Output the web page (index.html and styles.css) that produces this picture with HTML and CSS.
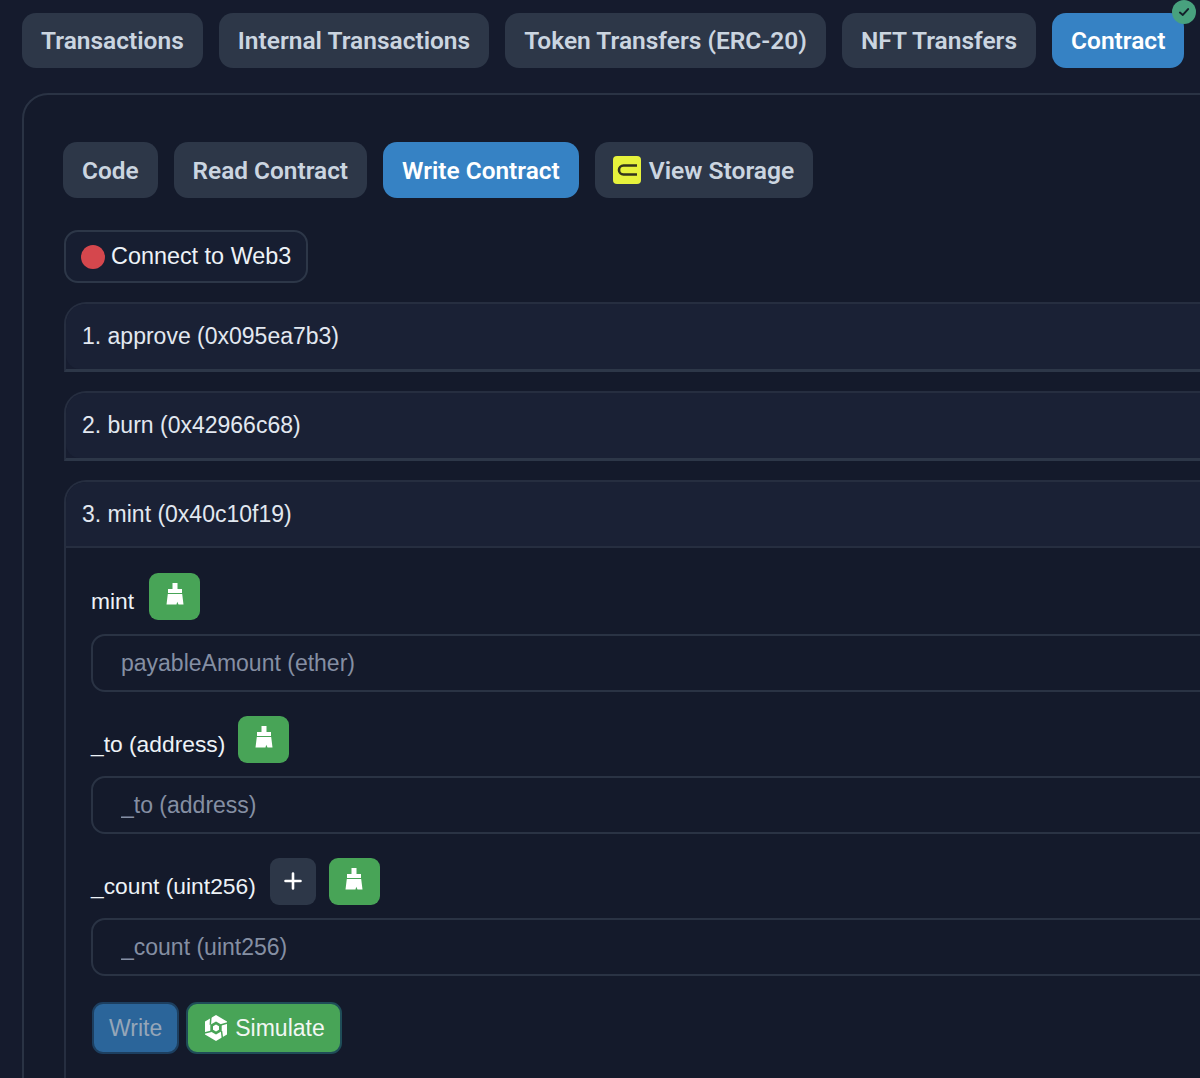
FILE: index.html
```html
<!DOCTYPE html>
<html lang="en">
<head>
  <meta charset="UTF-8" />
  <meta name="viewport" content="width=device-width, initial-scale=1.0" />
  <title>Contract – Write Contract</title>
  <link rel="stylesheet" href="styles.css">
</head>
<body>

  <nav class="tabs">
    <button class="tab">Transactions</button>
    <button class="tab">Internal Transactions</button>
    <button class="tab">Token Transfers (ERC-20)</button>
    <button class="tab">NFT Transfers</button>
    <button class="tab active verified">
      Contract
      <span class="check">
        <svg viewBox="0 0 24 24" width="14" height="14"><path d="M5 13l5 4L19 7" fill="none" stroke="#14202b" stroke-width="3.4" stroke-linecap="round" stroke-linejoin="round"/></svg>
      </span>
    </button>
  </nav>

  <main class="panel">
    <div class="tabs subtabs">
      <button class="tab">Code</button>
      <button class="tab">Read Contract</button>
      <button class="tab active">Write Contract</button>
      <button class="tab storage">
        <svg viewBox="0 0 28 28" width="28" height="28">
          <rect width="28" height="28" rx="4" fill="#e6f23c"/>
          <path d="M24 9.500H10.500a4.500 4.500 0 0 0 0 9H24" fill="none" stroke="#33351c" stroke-width="2.600"/>
        </svg>
        View Storage
      </button>
    </div>

    <button class="connect"><span class="dot"></span>Connect to Web3</button>

    <section class="item">
      <h3 class="item-head">1. approve (0x095ea7b3)</h3>
    </section>
    <section class="item">
      <h3 class="item-head">2. burn (0x42966c68)</h3>
    </section>

    <section class="item open">
      <h3 class="item-head">3. mint (0x40c10f19)</h3>
      <form class="item-body">
        <div class="field">
          <div class="label-row">
            <label>mint</label>
            <button type="button" class="icon-btn clear">
              <svg viewBox="0 0 18 22" width="18" height="22"><path d="M6.500 0h5v6h4.500v4H2V6h4.500zM1.800 11h14.400l1.300 10.500h-5l-1.300-2.800-.7 2.800H.5z" fill="#fff"/></svg>
            </button>
          </div>
          <input class="text-input" placeholder="payableAmount (ether)">
        </div>
        <div class="field">
          <div class="label-row">
            <label>_to (address)</label>
            <button type="button" class="icon-btn clear">
              <svg viewBox="0 0 18 22" width="18" height="22"><path d="M6.500 0h5v6h4.500v4H2V6h4.500zM1.800 11h14.400l1.300 10.500h-5l-1.300-2.800-.7 2.800H.5z" fill="#fff"/></svg>
            </button>
          </div>
          <input class="text-input" placeholder="_to (address)">
        </div>
        <div class="field">
          <div class="label-row">
            <label>_count (uint256)</label>
            <button type="button" class="icon-btn add">
              <svg viewBox="0 0 20 20" width="20" height="20"><path d="M10 2.500v15M2.500 10h15" stroke="#fff" stroke-width="2.600" stroke-linecap="round"/></svg>
            </button>
            <button type="button" class="icon-btn clear">
              <svg viewBox="0 0 18 22" width="18" height="22"><path d="M6.500 0h5v6h4.500v4H2V6h4.500zM1.800 11h14.400l1.300 10.500h-5l-1.300-2.800-.7 2.800H.5z" fill="#fff"/></svg>
            </button>
          </div>
          <input class="text-input" placeholder="_count (uint256)">
        </div>
        <div class="actions">
          <button type="button" class="write">Write</button>
          <button type="button" class="simulate">
            <svg viewBox="0 0 26 28" width="26" height="28">
              <path d="M13 1l11 6.400v13.200L13 27 2 20.600V7.400z" fill="#fff"/>
              <path d="M13 7.500l5.700 3.300v6.400L13 20.500l-5.700-3.300v-6.400z" fill="#48a457"/>
              <path d="M13 10.500l3 1.700v3.600l-3 1.700-3-1.700v-3.600z" fill="#fff"/>
              <path d="M8 1.500L7.300 10.800M24.500 9l-7 2M19.500 25l-1-8M1.500 19l7-1.800" stroke="#48a457" stroke-width="1.500" fill="none"/>
            </svg>
            Simulate
          </button>
        </div>
      </form>
    </section>
  </main>

</body>
</html>
```

FILE: styles.css
```css
* {
  margin: 0;
  padding: 0;
  box-sizing: border-box;
}

html, body {
  height: 1078px;
  overflow: hidden;
}

body {
  background: #151b2d;
  color: #fff;
  font-family: 'Liberation Sans', Arial, sans-serif;
  padding: 13px 0 0 22px;
}

button {
  border: 0;
  cursor: pointer;
  font-family: inherit;
}

/* Tabs */
.tabs {
  display: flex;
  gap: 16px;
}

.tab {
  height: 55px;
  padding: 0 19px;
  border-radius: 14px;
  background: #2d3748;
  color: #cbd5e0;
  font-family: Roboto, sans-serif;
  font-size: 24.5px;
  font-weight: 600;
  white-space: nowrap;
  position: relative;
}

.tab.active {
  background: #3682c4;
  color: #fff;
}

.check {
  position: absolute;
  top: -13px;
  right: -12px;
  width: 24px;
  height: 24px;
  border-radius: 50%;
  background: #48a17e;
  display: flex;
  align-items: center;
  justify-content: center;
}

/* Panel */
.panel {
  width: 1300px;
  height: 1100px;
  margin-top: 25px;
  padding: 47px 39px;
  background: #141a2b;
  border: 2px solid #2a3344;
  border-radius: 26px;
}

.subtabs {
  height: 56px;
}

.subtabs .tab {
  height: 56px;
  font-size: 24.4px;
}

.subtabs .storage {
  display: flex;
  align-items: center;
  gap: 8px;
  padding: 0 19px 0 18px;
  font-size: 24.6px;
}

.connect {
  display: flex;
  align-items: center;
  gap: 6px;
  height: 53px;
  margin: 32px 0 19px 1px;
  padding: 0 15px;
  background: #171e31;
  border: 2px solid #2d3748;
  border-radius: 14px;
  color: #edf2f7;
  font-size: 23.4px;
}

.dot {
  width: 24px;
  height: 24px;
  border-radius: 50%;
  background: #d5474d;
}

/* Accordion */
.item {
  margin: 0 0 19px 1px;
  border: 2px solid #262e40;
  border-bottom: 3px solid #2d3748;
  border-radius: 22px 0 0 0;
  background: #171d30;
}

.item-head {
  height: 65px;
  padding: 0 16px;
  display: flex;
  align-items: center;
  background: #1a2135;
  border-radius: 20px 0 0 14px;
  color: #e2e8f0;
  font-size: 23px;
  font-weight: 400;
}

.item.open {
  border-bottom: 0;
  padding-bottom: 40px;
  background: #141a2b;
}

.item.open .item-head {
  height: 66px;
  border-radius: 20px 0 0 0;
  border-bottom: 2px solid #262e40;
}

.item-body {
  padding: 24px 25px 0;
  display: flex;
  flex-direction: column;
  gap: 23px;
}

.label-row {
  display: flex;
  align-items: center;
  gap: 13px;
  height: 48px;
  margin-bottom: 13px;
}

.field:first-child .label-row {
  gap: 15px;
  margin-bottom: 14px;
}

.label-row label {
  font-size: 22.8px;
  color: #edf2f7;
  padding-top: 10px;
}

.icon-btn {
  height: 47px;
  border-radius: 9px;
  display: flex;
  align-items: center;
  justify-content: center;
}

.clear {
  width: 51px;
  background: #48a457;
}

.clear svg {
  margin-bottom: 4px;
}

.add {
  width: 46px;
  margin-left: 1px;
  background: #2d3748;
}

.text-input {
  display: block;
  width: 100%;
  height: 58px;
  padding: 0 28px;
  background: transparent;
  border: 2px solid #2a3344;
  border-radius: 14px;
  color: #edf2f7;
  font-family: inherit;
  font-size: 23px;
}

.text-input::placeholder {
  color: #858fa3;
  opacity: 1;
}

.actions {
  display: flex;
  gap: 7px;
  margin: 3px 0 0 1px;
}

.write, .simulate {
  height: 52px;
  border: 2px solid #1f4d58;
  border-radius: 11px;
  font-size: 23px;
}

.write {
  padding: 0 15px;
  background: #2b659a;
  color: #95a6b8;
  border-color: #1d3f60;
}

.simulate {
  display: flex;
  align-items: center;
  gap: 6px;
  padding: 0 15px;
  background: #48a457;
  color: #f2f7f3;
}
```
